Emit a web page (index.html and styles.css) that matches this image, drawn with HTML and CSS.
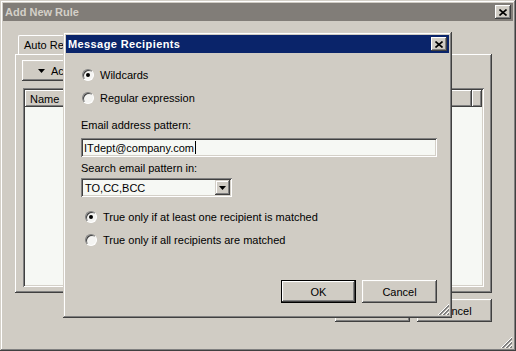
FILE: index.html
```html
<!DOCTYPE html>
<html lang="en">
<head>
  <meta charset="UTF-8">
  <meta name="viewport" content="width=device-width, initial-scale=1.0">
  <title>Add New Rule</title>
  <link rel="stylesheet" href="styles.css">
</head>
<body>

  <div class="window">
    <div class="titlebar titlebar--inactive">
      <span class="titlebar__text">Add New Rule</span>
      <button type="button" class="titlebar__close">
        <svg width="8" height="7" viewBox="0 0 8 7"><path d="M0.5 0.5L7.5 6.5M7.5 0.5L0.5 6.5" stroke="#000" stroke-width="1.6"/></svg>
      </button>
    </div>

    <div class="window__body">
      <div class="tabs">
        <div class="tab tab--active">Auto Reply</div>
      </div>

      <div class="tabPanel">
        <button type="button" class="btn btn--menu">
          <svg width="7" height="4" viewBox="0 0 7 4"><polygon points="0,0 7,0 3.5,4" fill="#000"/></svg>
          Actions
        </button>
        <div class="listView">
          <div class="listView__header">
            <span class="listView__col listView__col--name">Name</span>
            <span class="listView__col listView__col--end"></span>
          </div>
          <div class="listView__rows"></div>
        </div>
      </div>

      <div class="footer">
        <button type="button" class="btn">OK</button>
        <button type="button" class="btn">Cancel</button>
      </div>

      <div class="grip">
        <svg width="12" height="12" viewBox="0 0 12 12">
          <path d="M12 1L1 12M12 5L5 12M12 9L9 12" stroke="#fff"/>
          <path d="M12 2L2 12M12 3L3 12M12 6L6 12M12 7L7 12M12 10L10 12M12 11L11 12" stroke="#808080"/>
        </svg>
      </div>
    </div>

    <!-- modal on top of the rule window -->
    <div class="dialog">
      <div class="titlebar">
        <span class="titlebar__text titlebar__text--wide">Message Recipients</span>
        <button type="button" class="titlebar__close">
          <svg width="8" height="7" viewBox="0 0 8 7"><path d="M0.5 0.5L7.5 6.5M7.5 0.5L0.5 6.5" stroke="#000" stroke-width="1.6"/></svg>
        </button>
      </div>

      <div class="dialog__content">
        <div class="option">
          <span class="radio radio--checked"></span>
          <span>Wildcards</span>
        </div>
        <div class="option option--next">
          <span class="radio"></span>
          <span>Regular expression</span>
        </div>

        <label class="fieldLabel">Email address pattern:</label>
        <div class="textField">ITdept@company.com<span class="caret"></span></div>

        <label class="fieldLabel fieldLabel--tight">Search email pattern in:</label>
        <div class="comboBox">
          <span class="comboBox__value">TO,CC,BCC</span>
          <span class="comboBox__btn">
            <svg width="7" height="4" viewBox="0 0 7 4"><polygon points="0,0 7,0 3.5,4" fill="#000"/></svg>
          </span>
        </div>

        <div class="option option--group">
          <span class="radio radio--checked"></span>
          <span>True only if at least one recipient is matched</span>
        </div>
        <div class="option option--group option--next">
          <span class="radio"></span>
          <span>True only if all recipients are matched</span>
        </div>

        <div class="dialog__buttons">
          <button type="button" class="btn btn--default">OK</button>
          <button type="button" class="btn">Cancel</button>
        </div>
      </div>

      <div class="grip">
        <svg width="12" height="12" viewBox="0 0 12 12">
          <path d="M12 1L1 12M12 5L5 12M12 9L9 12" stroke="#fff"/>
          <path d="M12 2L2 12M12 3L3 12M12 6L6 12M12 7L7 12M12 10L10 12M12 11L11 12" stroke="#808080"/>
        </svg>
      </div>
    </div>
  </div>

</body>
</html>
```

FILE: styles.css
```css
* {
  box-sizing: border-box;
  padding: 0;
  margin: 0;
}
body {
  width: 516px;
  height: 351px;
  overflow: hidden;
  font-family: "Liberation Sans", Arial, sans-serif;
  font-size: 11px;
  color: #000;
  background-color: #d0ccc4;
}
button {
  font-family: inherit;
  font-size: inherit;
  color: inherit;
  border: none;
  outline: none;
}

/* classic raised / sunken edges */
.window, .dialog {
  background-color: #d0ccc4;
  box-shadow: inset -1px -1px #404040, inset 1px 1px #d4d0c8,
              inset -2px -2px #808080, inset 2px 2px #fff;
}
.btn {
  background-color: #d0ccc4;
  box-shadow: inset -1px -1px #404040, inset 1px 1px #fff,
              inset -2px -2px #808080, inset 2px 2px #d4d0c8;
}

.window {
  position: relative;
  display: flex;
  flex-direction: column;
  width: 516px;
  height: 351px;
  padding: 3px;
}
.titlebar {
  display: flex;
  align-items: center;
  justify-content: space-between;
  height: 18px;
  padding: 0 2px 0 2px;
  background-color: #0a246a;
  color: #fff;
}
.titlebar--inactive {
  background-color: #817d78;
  color: #d4d0c8;
}
.titlebar__text {
  font-weight: 700;
  font-size: 11px;
}
.titlebar__text--wide {
  letter-spacing: 0.4px;
}
.titlebar__close {
  display: flex;
  align-items: center;
  justify-content: center;
  width: 16px;
  height: 14px;
  background-color: #d0ccc4;
  box-shadow: inset -1px -1px #404040, inset 1px 1px #fff,
              inset -2px -2px #808080, inset 2px 2px #d4d0c8;
}

.window__body {
  flex-grow: 2;
  display: flex;
  flex-direction: column;
  padding-left: 12px;
}
.tabs {
  display: flex;
  align-items: flex-end;
  height: 19px;
  margin-top: 14px;
  padding-left: 3px;
}
.tab {
  height: 17px;
  padding: 2px 6px 0 5px;
  border-top: 1px solid #fff;
  border-left: 1px solid #fff;
  border-right: 1px solid #404040;
  border-radius: 2px 2px 0 0;
  white-space: nowrap;
}
.tab--active {
  height: 19px;
  padding-top: 3px;
}
.tabPanel {
  display: flex;
  flex-direction: column;
  align-items: flex-start;
  width: 477px;
  height: 239px;
  padding: 6px 7px 0 7px;
  box-shadow: inset -1px -1px #404040, inset 1px 1px #fff,
              inset -2px -2px #808080;
}
.btn--menu {
  display: flex;
  align-items: center;
  gap: 6px;
  width: 90px;
  height: 21px;
  padding-left: 16px;
}
.listView {
  display: flex;
  flex-direction: column;
  width: 461px;
  height: 199px;
  margin: 7px 0 0 1px;
  padding: 2px;
  background-color: #f6f8f4;
  box-shadow: inset 1px 1px #808080, inset -1px -1px #fff,
              inset 2px 2px #404040, inset -2px -2px #d4d0c8;
}
.listView__header {
  display: flex;
  height: 17px;
}
.listView__col {
  display: flex;
  align-items: center;
  padding-left: 5px;
  background-color: #d0ccc4;
  box-shadow: inset -1px -1px #404040, inset 1px 1px #fff,
              inset -2px -2px #808080;
}
.listView__col--name {
  width: 447px;
}
.listView__col--end {
  flex-grow: 1;
}

.footer {
  display: flex;
  justify-content: flex-end;
  gap: 7px;
  width: 477px;
  margin-top: 6px;
}
.footer .btn {
  width: 75px;
  height: 23px;
}
.grip {
  display: flex;
  align-self: flex-end;
  margin-top: auto;
  margin-right: 1px;
}
.dialog .grip {
  margin-right: 0;
}

/* Message Recipients */
.dialog {
  position: absolute;
  left: 63px;
  top: 32px;
  display: flex;
  flex-direction: column;
  width: 389px;
  height: 286px;
  padding: 3px;
}
.dialog__content {
  display: flex;
  flex-direction: column;
  padding: 14px 12px 0 15px;
}
.option {
  display: flex;
  align-items: center;
  gap: 6px;
  height: 16px;
  padding-left: 1px;
}
.option--next {
  margin-top: 7px;
}
.option--group {
  padding-left: 4px;
}
.comboBox + .option--group {
  margin-top: 12px;
}
.radio {
  display: flex;
  align-items: center;
  justify-content: center;
  width: 12px;
  height: 12px;
  border-radius: 50%;
  background-color: #f4f4f2;
  border: 1px solid;
  border-color: #808080 #fff #fff #808080;
  box-shadow: inset 1px 1px #404040;
}
.radio--checked::after {
  content: "";
  width: 4px;
  height: 4px;
  border-radius: 50%;
  background-color: #000;
}
.fieldLabel {
  display: block;
  height: 16px;
  line-height: 16px;
  margin-top: 11px;
}
.fieldLabel--tight {
  margin-top: 3px;
}
.textField {
  display: flex;
  align-items: center;
  height: 19px;
  margin-top: 5px;
  padding-left: 3px;
  background-color: #f6f8f4;
  box-shadow: inset 1px 1px #808080, inset -1px -1px #fff,
              inset 2px 2px #404040, inset -2px -2px #d4d0c8;
}
.caret {
  width: 1px;
  height: 13px;
  margin-left: 1px;
  background-color: #000;
}
.comboBox {
  display: flex;
  align-items: center;
  justify-content: space-between;
  width: 151px;
  height: 19px;
  margin-top: 2px;
  padding: 2px;
  background-color: #f6f8f4;
  box-shadow: inset 1px 1px #808080, inset -1px -1px #fff,
              inset 2px 2px #404040, inset -2px -2px #d4d0c8;
}
.comboBox__value {
  padding-left: 2px;
}
.comboBox__btn {
  display: flex;
  align-items: center;
  justify-content: center;
  width: 15px;
  height: 15px;
  background-color: #d0ccc4;
  box-shadow: inset -1px -1px #404040, inset 1px 1px #d4d0c8,
              inset -2px -2px #808080, inset 2px 2px #fff;
}
.dialog__buttons {
  display: flex;
  justify-content: flex-end;
  gap: 6px;
  margin-top: 32px;
}
.dialog__buttons .btn {
  width: 75px;
  height: 23px;
}
.btn--default {
  border: 1px solid #000;
}
```
